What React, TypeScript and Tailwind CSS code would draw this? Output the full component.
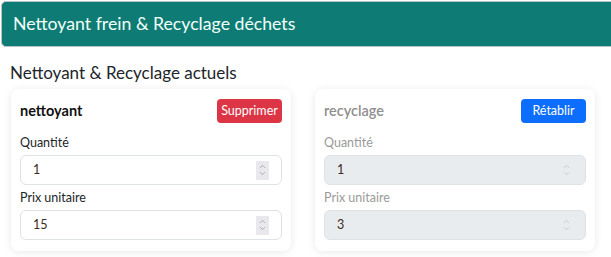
import { ChevronUp, ChevronDown } from 'lucide-react';

type FieldProps = {
    label: string;
    value: string;
    disabled?: boolean;
};

const Spinner = ({ disabled }: { disabled?: boolean }) => (
    <div
        className={`flex flex-col items-center justify-center w-[13px] h-[19px] ${
            disabled ? '' : 'bg-[#e9e9ed]'
        }`}
    >
        <ChevronUp
            size={9}
            strokeWidth={1.7}
            className={`-mb-[1px] ${disabled ? 'text-[#b8b8bf]' : 'text-[#85858f]'}`}
        />
        <ChevronDown
            size={9}
            strokeWidth={1.7}
            className={`-mt-[1px] ${disabled ? 'text-[#b8b8bf]' : 'text-[#85858f]'}`}
        />
    </div>
);

const Field = ({ label, value, disabled }: FieldProps) => (
    <div className="flex flex-col">
        <label
            className={`text-[12.5px] leading-[14px] mb-[5px] ${
                disabled ? 'text-[#9a9a9a]' : 'text-[#212529]'
            }`}
        >
            {label}
        </label>
        <div
            className={`flex items-center justify-between h-[30px] pl-[12px] pr-[12px] rounded-[6px] border ${
                disabled
                    ? 'bg-[#e9ecef] border-[#dee2e6]'
                    : 'bg-white border-[#dee2e6]'
            }`}
        >
            <span className="text-[12.5px] leading-[14px] text-[#3a2a22]">{value}</span>
            <Spinner disabled={disabled} />
        </div>
    </div>
);

type CardProps = {
    name: string;
    action: string;
    disabled?: boolean;
    quantity: string;
    price: string;
};

const ItemCard = ({ name, action, disabled, quantity, price }: CardProps) => (
    <div className="flex-1 bg-white rounded-[8px] shadow-[0_1px_8px_rgba(0,0,0,0.09)] px-[9px] pt-[10px] pb-[11px]">
        <div className="flex items-center justify-between h-[24px]">
            <strong
                className={`text-[14.5px] leading-[18px] ${
                    disabled ? 'text-[#8f8f8f] font-semibold' : 'text-[#111] font-bold'
                }`}
            >
                {name}
            </strong>
            <button
                className={`h-[24px] w-[65px] rounded-[4px] text-white text-[12.5px] leading-[16px] ${
                    disabled ? 'bg-[#0d6efd]' : 'bg-[#dc3545]'
                }`}
            >
                {action}
            </button>
        </div>
        <div className="flex flex-col gap-[6px] mt-[13px]">
            <Field label="Quantité" value={quantity} disabled={disabled} />
            <Field label="Prix unitaire" value={price} disabled={disabled} />
        </div>
    </div>
);

const App = () => {
    return (
        <div
            className="w-[611px] h-[257px] bg-white overflow-hidden"
            style={{ fontFamily: 'Lato, "Noto Sans", sans-serif' }}
        >
            {/* header */}
            <div className="mt-[1px] ml-[1px] w-[630px] h-[46px] bg-[#0e7c74] border border-[#b9c4c2] rounded-[5px] flex items-center pl-[11px]">
                <h1 className="text-[17.7px] leading-[22px] text-[#f2fff9]">
                    Nettoyant frein &amp; Recyclage déchets
                </h1>
            </div>

            <div className="px-[11px]">
                <h2 className="text-[17px] leading-[20px] text-[#212529] mt-[16px] mb-[6px] -ml-[1px]">
                    Nettoyant &amp; Recyclage actuels
                </h2>
                <div className="flex gap-[24px] w-[584px]">
                    <ItemCard name="nettoyant" action="Supprimer" quantity="1" price="15" />
                    <ItemCard
                        name="recyclage"
                        action="Rétablir"
                        quantity="1"
                        price="3"
                        disabled
                    />
                </div>
            </div>
        </div>
    );
};

export default App;
